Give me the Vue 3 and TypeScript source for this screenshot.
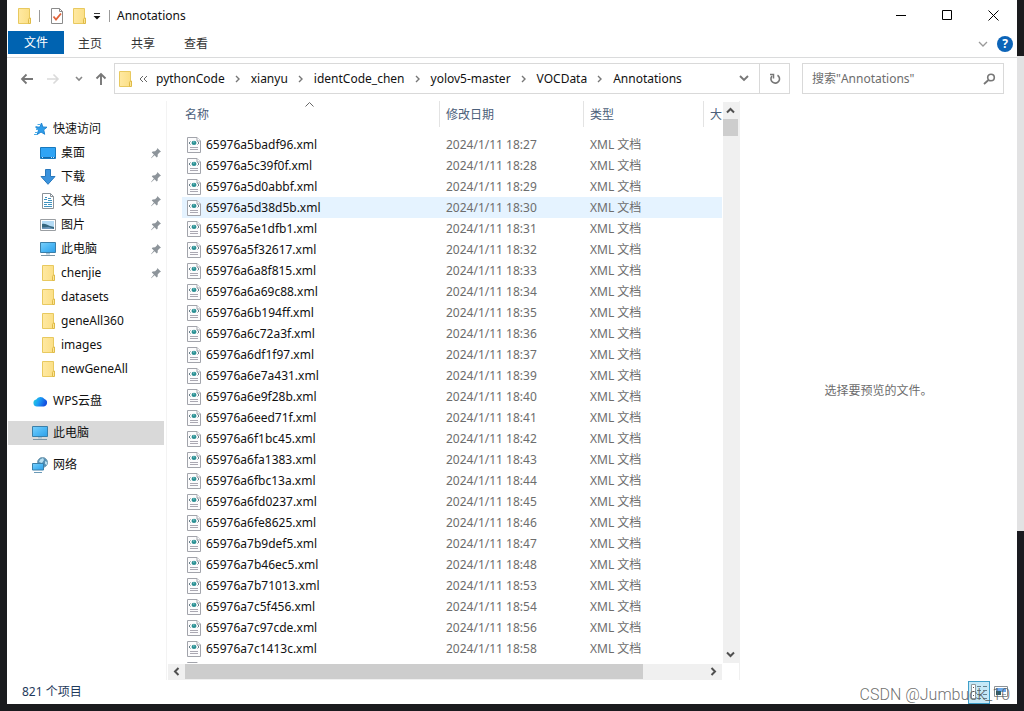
<script setup lang="ts">
interface SideItem {
  label: string
  icon: 'desktop' | 'download' | 'document' | 'picture' | 'pc' | 'folder'
  pinned?: boolean
}

interface FileRow {
  name: string
  date: string
}

const tabs: string[] = ['主页', '共享', '查看']
const crumbs: string[] = ['pythonCode', 'xianyu', 'identCode_chen', 'yolov5-master', 'VOCData', 'Annotations']

const quickItems: SideItem[] = [
  { label: '桌面', icon: 'desktop', pinned: true },
  { label: '下载', icon: 'download', pinned: true },
  { label: '文档', icon: 'document', pinned: true },
  { label: '图片', icon: 'picture', pinned: true },
  { label: '此电脑', icon: 'pc', pinned: true },
  { label: 'chenjie', icon: 'folder', pinned: true },
  { label: 'datasets', icon: 'folder' },
  { label: 'geneAll360', icon: 'folder' },
  { label: 'images', icon: 'folder' },
  { label: 'newGeneAll', icon: 'folder' },
]

const entries: [string, string][] = [
  ['65976a5badf96', '18:27'],
  ['65976a5c39f0f', '18:28'],
  ['65976a5d0abbf', '18:29'],
  ['65976a5d38d5b', '18:30'],
  ['65976a5e1dfb1', '18:31'],
  ['65976a5f32617', '18:32'],
  ['65976a6a8f815', '18:33'],
  ['65976a6a69c88', '18:34'],
  ['65976a6b194ff', '18:35'],
  ['65976a6c72a3f', '18:36'],
  ['65976a6df1f97', '18:37'],
  ['65976a6e7a431', '18:39'],
  ['65976a6e9f28b', '18:40'],
  ['65976a6eed71f', '18:41'],
  ['65976a6f1bc45', '18:42'],
  ['65976a6fa1383', '18:43'],
  ['65976a6fbc13a', '18:44'],
  ['65976a6fd0237', '18:45'],
  ['65976a6fe8625', '18:46'],
  ['65976a7b9def5', '18:47'],
  ['65976a7b46ec5', '18:48'],
  ['65976a7b71013', '18:53'],
  ['65976a7c5f456', '18:54'],
  ['65976a7c97cde', '18:56'],
  ['65976a7c1413c', '18:58'],
]

const files: FileRow[] = entries.map(([id, time]) => ({ name: `${id}.xml`, date: `2024/1/11 ${time}` }))
const hovered = 3
</script>

<template>
  <div class="screen">
    <svg class="defs" width="0" height="0" aria-hidden="true">
      <defs>
        <linearGradient id="blue" x1="0" y1="0" x2="1" y2="1">
          <stop offset="0" stop-color="#7bd0fb" />
          <stop offset="0.5" stop-color="#4db8f5" />
          <stop offset="1" stop-color="#2f9fe8" />
        </linearGradient>
        <linearGradient id="cloud" x1="0" y1="0" x2="1" y2="0.3">
          <stop offset="0" stop-color="#25d3d9" />
          <stop offset="0.5" stop-color="#1a9df5" />
          <stop offset="1" stop-color="#1450e0" />
        </linearGradient>
        <linearGradient id="paper" x1="0" y1="0" x2="1" y2="0">
          <stop offset="0" stop-color="#ffe9a2" />
          <stop offset="1" stop-color="#fbdf86" />
        </linearGradient>
        <symbol id="i-folder" viewBox="0 0 16 16">
          <path d="M2.500.5h11v15h-11z" fill="url(#paper)" stroke="#e8c95f" />
          <path d="M12.500 15.500v-4.200l1-1.300h1v5.500z" fill="#fde695" stroke="#dfba48" />
        </symbol>
        <symbol id="i-desktop" viewBox="0 0 16 16">
          <path d="M.5 2.500h15v11H.5z" fill="#2fa4f5" stroke="#1879bd" />
          <path d="M1 12.500h14" stroke="#1467a8" />
          <path d="M2 12.500h1M11 12.500h1M13 12.500h1" stroke="#c5e8ff" />
        </symbol>
        <symbol id="i-download" viewBox="0 0 16 16">
          <path d="M5.500.5h5v7h4.500L8 15.300 1 7.500h4.500z" fill="#3b93dd" stroke="#2878bd" />
        </symbol>
        <symbol id="i-document" viewBox="0 0 16 16">
          <path d="M2.500.5h8l3 3v12h-11z" fill="#fff" stroke="#8a9299" />
          <path d="M10.500.5v3h3" fill="none" stroke="#8a9299" />
          <path d="M4 6.500h3M5 4.500h2M8 5.500h3M8 7.500h4M4 9.500h8M4 11.500h3M8 11.500h4M4 13.500h8" stroke="#3f93c0" />
        </symbol>
        <symbol id="i-picture" viewBox="0 0 16 16">
          <path d="M.5 2.500h15v11H.5z" fill="#fff" stroke="#9a9ea2" />
          <path d="M2 4h12v8H2z" fill="#b4dbf5" />
          <path d="M2 7c3-1 5 1 8 2l4 1v2H2z" fill="#35677f" />
          <path d="M2 10.500l7-.5 5 2H2z" fill="#6d97bb" />
        </symbol>
        <symbol id="i-pc" viewBox="0 0 16 16">
          <path d="M.5 1.500h15v10H.5z" fill="url(#blue)" stroke="#3a7fa9" />
          <path d="M6 12h4v1.500H6z" fill="#a5c3d5" />
          <path d="M1 14.500h14" stroke="#7c95a5" />
        </symbol>
        <symbol id="i-star" viewBox="0 0 16 16">
          <path d="M9.500 2l1.300 4 4.200.2-3.300 2.600 1 4.500-3.700-2.300L5.200 13.500l1.300-4.400L3.800 6.300l4.200-.3z" fill="#2e9dea" stroke="#2286d2" />
          <path d="M5.500 3.500h3M3.500 5.500h2M4 8.500h2M3 11.500h3M2 13.500h3" stroke="#4eaee8" />
        </symbol>
        <symbol id="i-cloud" viewBox="0 0 16 16">
          <path d="M5 13.500a3.600 3.600 0 0 1-.8-7.100A5 5 0 0 1 12.500 6a3.900 3.900 0 0 1-.6 7.500z" fill="url(#cloud)" />
        </symbol>
        <symbol id="i-network" viewBox="0 0 16 16">
          <circle cx="10.500" cy="5.500" r="5" fill="#5590b5" stroke="#7b9fb3" />
          <path d="M8 2.500l3-1.500 1 2-2 3-3-1zM13 4l2 1v3l-2-1z" fill="#b9dff0" />
          <path d="M.5 6.500h11v6.500H.5z" fill="url(#blue)" stroke="#3a7fa9" />
          <path d="M2 15.500h8" stroke="#6b9ab7" />
        </symbol>
        <symbol id="i-pin" viewBox="0 0 12 12">
          <path d="M7.300 1l3.700 3.700-1.200.5-2 2-.2 2.500-.9.700L4.600 8.200 1.300 11.300 1 11l2.900-3.500L1.800 5.400l.8-.9 2.500-.2 2-2z" fill="#8d949a" />
        </symbol>
        <symbol id="i-xml" viewBox="0 0 14 16">
          <path d="M.5.5h9.500l3.500 3.500v11.500H.5z" fill="#fcfcfd" stroke="#a2a4ab" />
          <path d="M10 .5v3.500h3.500" fill="#fff" stroke="#a2a4ab" />
          <path d="M4.500 6a2.500 2.300 0 0 1 5 0 2.500 2 0 0 1-5 0z" fill="#2a8f93" />
          <path d="M6 4.500h1.500v1H6z" fill="#8fd0cf" />
          <path d="M3.500 4.500L2 6l1.500 1.500M10.500 4.500L12 6l-1.500 1.500" fill="none" stroke="#6c808a" />
          <path d="M3 10.500h8M3 12.500h8" stroke="#aaa8b2" />
        </symbol>
      </defs>
    </svg>

    <main class="window">
      <header class="titlebar">
        <svg class="ic" aria-hidden="true"><use href="#i-folder" /></svg>
        <span class="bar first"></span>
        <button class="plain" aria-label="属性">
          <svg class="ic" viewBox="0 0 16 16">
            <path d="M2.500.5h8l3 3v12h-11z" fill="#fff" stroke="#8b8b8b" />
            <path d="M10.500.5v3h3" fill="none" stroke="#8b8b8b" />
            <path d="M4.500 8.500l2.500 3 5-6" fill="none" stroke="#e0633a" stroke-width="1.800" />
          </svg>
        </button>
        <button class="plain new" aria-label="新建文件夹"><svg class="ic"><use href="#i-folder" /></svg></button>
        <button class="plain more" aria-label="自定义快速访问工具栏">
          <svg width="8" height="8" viewBox="0 0 8 8"><path d="M1 1.500h6" stroke="#333" /><path d="M0.500 4h7L4 7.500z" fill="#111" /></svg>
        </button>
        <span class="bar second"></span>
        <h1>Annotations</h1>
        <div class="sysbuttons">
          <button aria-label="最小化"><svg width="11" height="11"><path d="M0 5.500h10" stroke="#000" /></svg></button>
          <button aria-label="最大化"><svg width="11" height="11"><path d="M.5.5h9v9h-9z" fill="none" stroke="#000" /></svg></button>
          <button aria-label="关闭"><svg width="11" height="11"><path d="M.5.5l10 10M10.500.5l-10 10" stroke="#000" /></svg></button>
        </div>
      </header>

      <nav class="ribbon">
        <button class="file">文件</button>
        <div class="tabs"><button v-for="t in tabs" :key="t" class="tab">{{ t }}</button></div>
        <div class="ribbon-end">
          <button class="plain" aria-label="展开功能区"><svg width="10" height="8"><path d="M1 2l4 4 4-4" fill="none" stroke="#999" stroke-width="1.300" /></svg></button>
          <button class="help" aria-label="帮助">?</button>
        </div>
      </nav>

      <div class="navbar">
        <div class="arrows">
          <button class="plain" aria-label="后退"><svg width="14" height="12"><path d="M13 6H2M6.500 1.500L2 6l4.500 4.500" fill="none" stroke="#777" stroke-width="1.800" /></svg></button>
          <button class="plain" aria-label="前进"><svg width="14" height="12"><path d="M1 6h11M7.500 1.500L12 6l-4.500 4.500" fill="none" stroke="#dadada" stroke-width="1.600" /></svg></button>
          <button class="plain recent" aria-label="最近位置"><svg width="8" height="6"><path d="M1 1l3 3 3-3" fill="none" stroke="#888" stroke-width="1.600" /></svg></button>
          <button class="plain" aria-label="向上"><svg width="12" height="14"><path d="M6 13V2M1.500 6.500L6 2l4.500 4.500" fill="none" stroke="#777" stroke-width="1.900" /></svg></button>
        </div>
        <div class="address">
          <svg class="ic" aria-hidden="true"><use href="#i-folder" /></svg>
          <svg class="dbl" width="9" height="8"><path d="M4 1L1 4l3 3M8 1L5 4l3 3" fill="none" stroke="#666" /></svg>
          <template v-for="(c, i) in crumbs" :key="c">
            <svg v-if="i" class="sep" width="6" height="8"><path d="M1 1l3 3-3 3" fill="none" stroke="#777" stroke-width="1.400" /></svg>
            <button class="plain crumb">{{ c }}</button>
          </template>
          <button class="plain drop" aria-label="以前的位置"><svg width="10" height="7"><path d="M1 1l4 4 4-4" fill="none" stroke="#777" stroke-width="1.900" /></svg></button>
          <button class="plain refresh" aria-label="刷新">
            <svg width="12" height="12"><path d="M8.500 2.200A4.300 4.300 0 1 1 3 3" fill="none" stroke="#777" stroke-width="1.600" /><path d="M1 1.500h3.500V5.500" fill="none" stroke="#777" stroke-width="1.500" /></svg>
          </button>
        </div>
        <label class="search">
          <input type="text" placeholder="搜索&quot;Annotations&quot;" aria-label="搜索" />
          <svg width="13" height="12"><circle cx="8" cy="4.500" r="3.300" fill="none" stroke="#777" stroke-width="1.600" /><path d="M5.500 7L1 11" stroke="#777" stroke-width="1.800" /></svg>
        </label>
      </div>

      <div class="content">
        <aside class="sidebar">
          <a href="#" class="root"><svg class="ic"><use href="#i-star" /></svg>快速访问</a>
          <a v-for="q in quickItems" :key="q.label" href="#" class="child">
            <svg class="ic"><use :href="`#i-${q.icon}`" /></svg>{{ q.label }}
            <svg v-if="q.pinned" class="pin"><use href="#i-pin" /></svg>
          </a>
          <a href="#" class="root group"><svg class="ic"><use href="#i-cloud" /></svg>WPS云盘</a>
          <a href="#" class="root group selected"><svg class="ic"><use href="#i-pc" /></svg>此电脑</a>
          <a href="#" class="root group"><svg class="ic"><use href="#i-network" /></svg>网络</a>
        </aside>

        <section class="list">
          <div class="rows">
            <table>
              <colgroup><col class="c-name" /><col class="c-date" /><col class="c-type" /><col /></colgroup>
              <thead>
                <tr>
                  <th scope="col" class="sorted">
                    <div>名称</div>
                    <svg class="sort" width="9" height="5"><path d="M.5 4.500l4-4 4 4" fill="none" stroke="#666" /></svg>
                  </th>
                  <th scope="col"><div>修改日期</div></th>
                  <th scope="col"><div>类型</div></th>
                  <th scope="col"><div class="last">大</div></th>
                </tr>
              </thead>
              <tbody>
                <tr v-for="(f, i) in files" :key="f.name" :class="{ hovered: i === hovered }">
                  <td class="name"><svg class="xml"><use href="#i-xml" /></svg>{{ f.name }}</td>
                  <td>{{ f.date }}</td>
                  <td>XML 文档</td>
                  <td></td>
                </tr>
                <tr><td class="name"><svg class="xml"><use href="#i-xml" /></svg></td><td></td><td></td><td></td></tr>
              </tbody>
            </table>
          </div>
          <div class="vscroll">
            <button class="plain" aria-label="向上滚动"><svg width="9" height="7"><path d="M1 5.500L4.500 2 8 5.500" fill="none" stroke="#505050" stroke-width="2" /></svg></button>
            <span class="thumb"></span>
            <button class="plain end" aria-label="向下滚动"><svg width="9" height="7"><path d="M1 1.500L4.500 5 8 1.500" fill="none" stroke="#505050" stroke-width="2" /></svg></button>
          </div>
          <div class="hscroll">
            <button class="plain" aria-label="向左滚动"><svg width="7" height="9"><path d="M5.500 1L2 4.500 5.500 8" fill="none" stroke="#505050" stroke-width="2" /></svg></button>
            <div class="track"><span class="thumb"></span></div>
            <button class="plain" aria-label="向右滚动"><svg width="7" height="9"><path d="M1.500 1L5 4.500 1.500 8" fill="none" stroke="#505050" stroke-width="2" /></svg></button>
          </div>
        </section>

        <section class="preview">选择要预览的文件。</section>
      </div>

      <footer class="status">
        <span>821 个项目</span>
        <div class="views">
          <button class="view on" aria-label="详细信息">
            <svg width="18" height="16">
              <path d="M1.500.5h4v14h-4z" fill="#fff" stroke="#909a9f" />
              <path d="M3 3.500h1M3 7.500h1M3 11.500h1" stroke="#555" />
              <path d="M7 2.500h10M7 6.500h10M7 10.500h10M7 14.500h10" stroke="#66808c" stroke-dasharray="4 2" />
            </svg>
          </button>
          <button class="view" aria-label="大图标">
            <svg width="14" height="12"><path d="M.5.5h13v10H.5z" fill="#fff" stroke="#8c9296" /><path d="M2 2h10v4H2z" fill="#6ba9ec" /><path d="M2 5h5v4H2z" fill="#2f5f6d" /><path d="M8 8.500h4" stroke="#aaa" /></svg>
          </button>
        </div>
      </footer>
    </main>
    <div class="watermark">CSDN @Jumbuck_10</div>
  </div>
</template>

<style>
body {
  background: #1a1b20;
}
</style>

<style scoped>
.screen {
  position: relative;
  box-sizing: border-box;
  height: 100vh;
  padding: 0 7px 7px;
  background:
    linear-gradient(#1a1b1e 56px, #e2e2e3 56px, #e2e2e3 531px, #1a1b20 531px) right / 7px 100% no-repeat,
    #1a1b1e;
  font: 12px/16px "Noto Sans", "Noto Sans CJK SC", sans-serif;
  color: #111;
}
.defs {
  position: absolute;
}
.window {
  display: flex;
  flex-direction: column;
  height: 100%;
  background: #fff;
}
button {
  font: inherit;
  color: inherit;
  border: 0;
  padding: 0;
  background: none;
}
.plain {
  display: flex;
  align-items: center;
  justify-content: center;
}
.ic {
  display: block;
  flex: none;
  width: 16px;
  height: 16px;
}
.titlebar {
  display: flex;
  align-items: center;
  height: 31px;
  padding-left: 9px;
}
.bar {
  width: 1px;
  height: 12px;
  background: #9a9a9a;
}
.first {
  margin: 0 9px 0 7px;
}
.new {
  margin-left: 6px;
}
.more {
  margin: 0 8px 0 6px;
}
h1 {
  margin: 0 0 0 7px;
  font-size: 12px;
  font-weight: 400;
}
.sysbuttons {
  display: flex;
  align-self: stretch;
  margin-left: auto;
  padding-right: 1px;
}
.sysbuttons button {
  display: flex;
  align-items: center;
  justify-content: center;
  width: 46px;
}
.ribbon {
  display: flex;
  height: 26px;
  padding-left: 1px;
  border-bottom: 1px solid #dadbdc;
  color: #333;
}
.file {
  width: 56px;
  height: 23px;
  background: #0063b1;
  color: #fff;
}
.tabs {
  display: flex;
  gap: 1px;
}
.tab {
  width: 52px;
  height: 25px;
}
.ribbon-end {
  display: flex;
  align-items: center;
  gap: 9px;
  margin-left: auto;
  padding-right: 4px;
}
.help {
  width: 16px;
  height: 16px;
  border-radius: 50%;
  background: #0c64b8;
  color: #fff;
  font-weight: 700;
  line-height: 16px;
}
.navbar {
  display: flex;
  align-items: center;
  height: 41px;
  padding: 0 13px 2px 0;
}
.arrows {
  display: flex;
  align-items: center;
  gap: 12px;
  width: 94px;
  padding-left: 13px;
}
.recent {
  padding-left: 3px;
}
.address,
.search {
  display: flex;
  align-items: center;
  box-sizing: border-box;
  height: 31px;
  border: 1px solid #d9d9d9;
}
.address {
  flex: 1;
  padding-left: 2px;
}
.dbl {
  margin: 0 8px 0 6px;
}
.sep {
  margin: 0 10px;
}
.drop {
  width: 30px;
  margin-left: auto;
}
.refresh {
  width: 30px;
  height: 100%;
  border-left: 1px solid #d9d9d9;
}
.search {
  width: 202px;
  margin-left: 12px;
  padding: 0 7px 0 9px;
}
.search input {
  flex: 1;
  min-width: 0;
  padding: 0;
  border: 0;
  outline: 0;
  font: inherit;
}
.search input::placeholder {
  color: #6d6d6d;
  opacity: 1;
}
.content {
  display: flex;
  flex: 1;
  min-height: 0;
}
.sidebar {
  box-sizing: border-box;
  width: 160px;
  padding: 16px 2px 0 1px;
  border-right: 1px solid #f3f3f3;
}
.sidebar a {
  display: flex;
  align-items: center;
  gap: 5px;
  height: 24px;
  padding-left: 24px;
  color: inherit;
  text-decoration: none;
}
.sidebar .child {
  padding-left: 32px;
}
.sidebar .group {
  margin-top: 8px;
}
.sidebar .selected {
  background: #d9d9d9;
}
.pin {
  width: 12px;
  height: 12px;
  margin: 0 2px 0 auto;
}
.list {
  display: grid;
  grid-template: minmax(0, 1fr) 16px / minmax(0, 1fr) 16px;
  width: 571px;
  gap: 1px;
  padding: 0 0 0 1px;
  border-right: 1px solid #f0f0f0;
}
.rows {
  overflow: hidden;
  padding-left: 14px;
}
table {
  width: 100%;
  table-layout: fixed;
  border-collapse: collapse;
}
.c-name {
  width: 258px;
}
.c-date {
  width: 144px;
}
.c-type {
  width: 120px;
}
th {
  height: 33px;
  padding: 0;
  vertical-align: top;
  font-weight: 400;
  text-align: left;
  color: #4c607a;
}
th div {
  height: 26px;
  padding-left: 6px;
  border-right: 1px solid #e3e3e3;
  line-height: 28px;
  white-space: nowrap;
}
th .last {
  border: 0;
}
.sorted {
  position: relative;
}
.sorted div {
  padding-left: 3px;
}
.sort {
  position: absolute;
  top: 1px;
  left: 50%;
  margin-left: -6px;
}
td {
  height: 21px;
  padding: 0 0 0 6px;
  line-height: 21px;
  color: #6d6d6d;
}
td.name {
  display: flex;
  align-items: center;
  gap: 5px;
  padding-left: 5px;
  color: #111;
}
.xml {
  width: 14px;
  height: 16px;
}
.hovered {
  background: #e5f3ff;
}
.vscroll {
  display: flex;
  flex-direction: column;
  margin-top: 1px;
  background: #f0f0f0;
}
.vscroll button {
  width: 15px;
  height: 17px;
}
.vscroll .thumb {
  width: 15px;
  height: 17px;
  background: #cdcdcd;
}
.vscroll .end {
  margin-top: auto;
}
.hscroll {
  display: flex;
  background: #f0f0f0;
}
.hscroll button {
  width: 17px;
  height: 15px;
}
.track {
  flex: 1;
}
.hscroll .thumb {
  display: block;
  width: 88%;
  height: 15px;
  background: #cdcdcd;
}
.preview {
  display: flex;
  flex: 1;
  align-items: center;
  justify-content: center;
  color: #6d6d6d;
}
.status {
  display: flex;
  align-items: center;
  justify-content: space-between;
  height: 24px;
  padding: 0 5px 0 15px;
  color: #1e395b;
}
.views {
  display: flex;
}
.view {
  display: flex;
  align-items: center;
  justify-content: center;
  box-sizing: border-box;
  width: 22px;
  height: 23px;
}
.view.on {
  border: 1px solid #3f9fc9;
  background: #c5e8f7;
}
.watermark {
  position: absolute;
  right: 14px;
  bottom: 6px;
  font: 300 16px/20px Roboto, "Liberation Sans", sans-serif;
  color: rgba(85, 85, 85, 0.85);
}
</style>
